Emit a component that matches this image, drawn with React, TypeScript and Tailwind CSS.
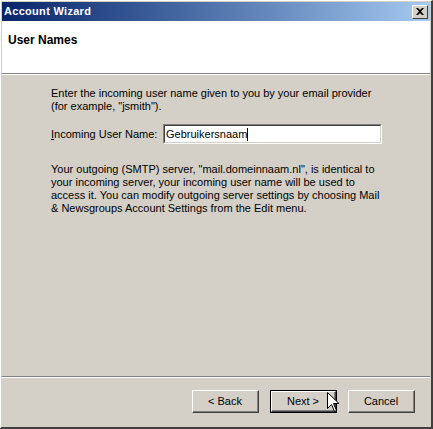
import React from 'react';

const font = { fontFamily: '"Liberation Sans", Arial, sans-serif' };

const Button: React.FC<{ label: string; isDefault?: boolean }> = ({ label, isDefault }) => (
  <div className={isDefault ? 'border border-black' : ''}>
    <div
      className={`flex items-center justify-center bg-[#d4d0c8] border border-t-white border-l-white border-r-[#404040] border-b-[#404040] ${
        isDefault ? 'w-[65px] h-[21px]' : 'w-[67px] h-[23px]'
      }`}
    >
      <div className="w-full h-full flex items-center justify-center border-r border-b border-[#808080] text-[11px] text-black">
        {label}
      </div>
    </div>
  </div>
);

const Cursor: React.FC = () => (
  <svg className="absolute left-[57px] top-[2px]" width="13" height="21" viewBox="0 0 13 21">
    <path
      d="M0.5 0.5 L0.5 16.5 L4.5 12.5 L7.5 19.5 L9.5 18.5 L6.5 11.5 L12 11.5 Z"
      fill="white"
      stroke="black"
      strokeWidth="1"
      strokeLinejoin="miter"
    />
  </svg>
);

export default function App() {
  return (
    <div
      className="w-[433px] h-[429px] flex flex-col bg-[#d4d0c8] border-t border-l border-white border-r-2 border-b-2 border-r-[#404040] border-b-[#404040]"
      style={font}
    >
      {/* title bar */}
      <div className="h-[19px] mx-px mt-px flex items-center justify-between bg-gradient-to-r from-[#0a246a] to-[#a6caf0] pl-[2px] pr-[2px]">
        <span className="text-white text-[11px] font-bold tracking-[0.3px]">Account Wizard</span>
        <div className="w-[16px] h-[14px] bg-[#d4d0c8] border border-t-white border-l-white border-r-[#404040] border-b-[#404040] flex items-center justify-center">
          <svg width="8" height="7" viewBox="0 0 8 7">
            <path d="M0 0 L2 0 L4 2 L6 0 L8 0 L5 3.5 L8 7 L6 7 L4 5 L2 7 L0 7 L3 3.5 Z" fill="black" />
          </svg>
        </div>
      </div>

      {/* page header */}
      <div className="h-[53px] bg-white pl-[6px] pt-[6px] border-b border-[#808080] mx-px">
        <span className="text-[12px] font-bold text-black">User Names</span>
      </div>
      <div className="h-px bg-white mx-px" />

      {/* page body */}
      <div className="flex-1 flex flex-col pl-[50px] pt-[12px] text-[11px] leading-[13px] text-black">
        <p>
          Enter the incoming user name given to you by your email provider
          <br />
          (for example, "jsmith").
        </p>
        <div className="flex items-center mt-[11px]">
          <span className="w-[112px]">
            <span className="underline">I</span>ncoming User Name:
          </span>
          <div className="w-[219px] h-[20px] border border-t-[#808080] border-l-[#808080] border-r-white border-b-white">
            <div className="w-full h-full bg-white border border-t-[#404040] border-l-[#404040] border-r-[#d4d0c8] border-b-[#d4d0c8] flex items-center pl-px">
              <span>Gebruikersnaam</span>
              <span className="w-px h-[13px] bg-black" />
            </div>
          </div>
        </div>
        <p className="mt-[19px]">
          Your outgoing (SMTP) server, "mail.domeinnaam.nl", is identical to
          <br />
          your incoming server, your incoming user name will be used to
          <br />
          access it. You can modify outgoing server settings by choosing Mail
          <br />
          &amp; Newsgroups Account Settings from the Edit menu.
        </p>
      </div>

      {/* footer */}
      <div className="h-px bg-[#808080] mx-px" />
      <div className="h-px bg-white mx-px" />
      <div className="h-[49px] flex items-start justify-end gap-[11px] pr-[16px] pt-[12px]">
        <Button label="< Back" />
        <div className="relative">
          <Button label="Next >" isDefault />
          <Cursor />
        </div>
        <Button label="Cancel" />
      </div>
    </div>
  );
}
